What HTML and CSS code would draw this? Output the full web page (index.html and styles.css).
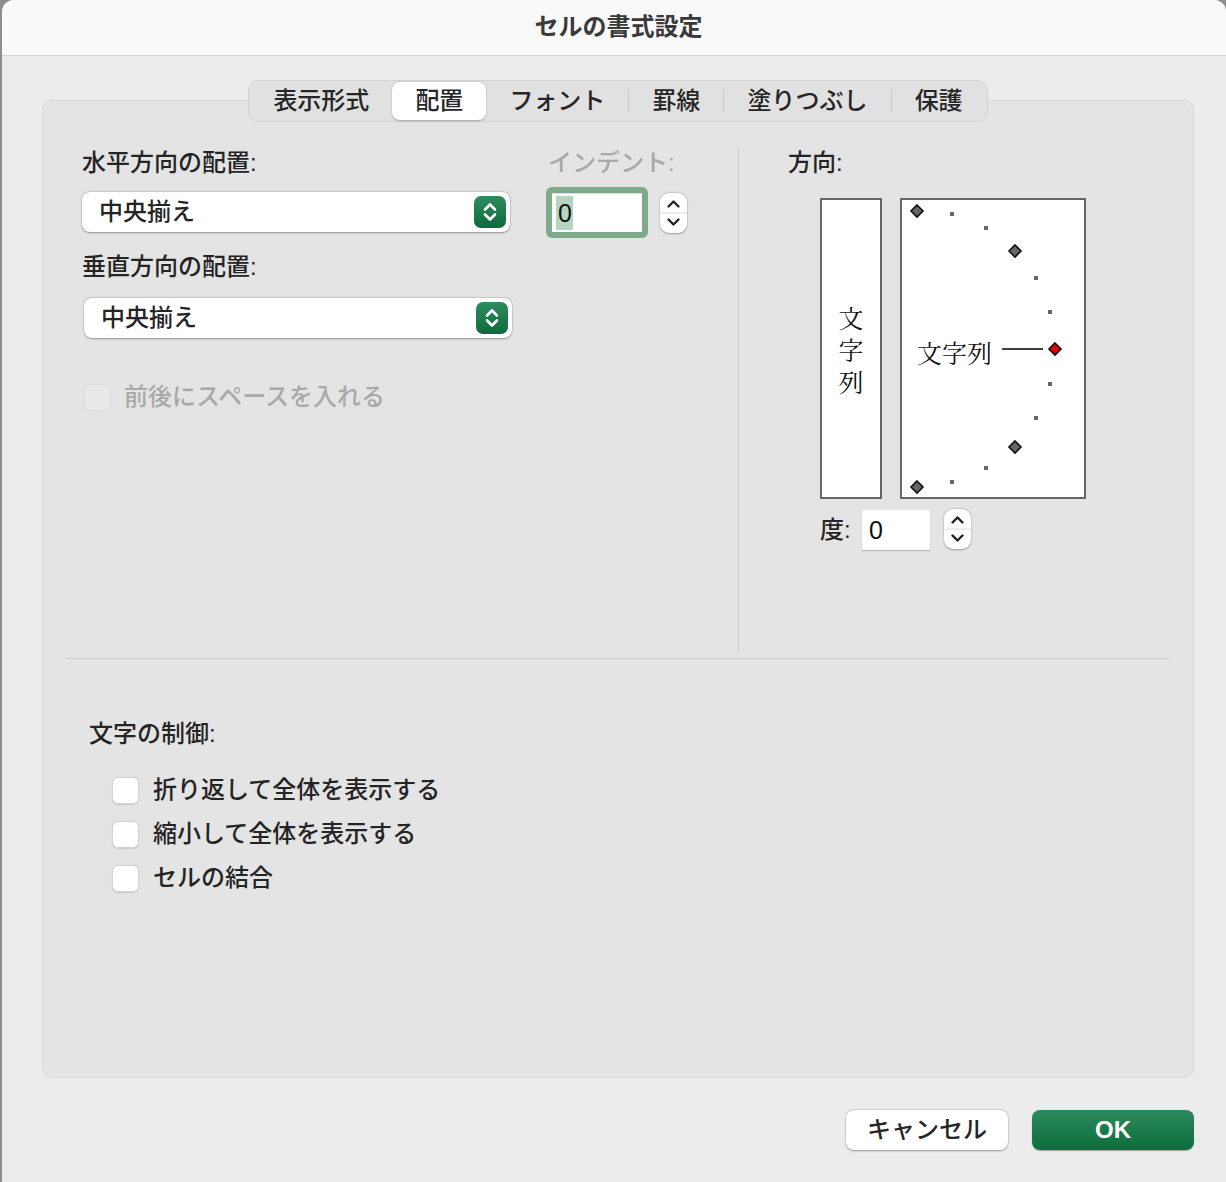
FILE: index.html
```html
<!DOCTYPE html>
<html lang="ja">
<head>
<meta charset="utf-8">
<title>セルの書式設定</title>
<link rel="stylesheet" href="styles.css">
</head>
<body>
<div class="window">
  <header class="titlebar"><h1 class="title">セルの書式設定</h1></header>
  <main class="content">
    <nav class="tabs">
      <span class="tab">表示形式</span>
      <span class="tab active">配置</span>
      <span class="tab">フォント</span><span class="sep"></span>
      <span class="tab">罫線</span><span class="sep"></span>
      <span class="tab">塗りつぶし</span><span class="sep"></span>
      <span class="tab">保護</span>
    </nav>
    <section class="panel">
      <div class="upper">
        <div class="left-col">
          <div class="align-col">
            <div class="label">水平方向の配置:</div>
            <div class="popup">
              <span class="popup-text">中央揃え</span>
              <span class="popup-btn"><svg viewBox="0 0 32 32" width="32" height="32"><path d="M11 13.5 L16 8.5 L21 13.5 M11 18.5 L16 23.5 L21 18.5" stroke="#fff" stroke-width="2.6" fill="none" stroke-linecap="round" stroke-linejoin="round"/></svg></span>
            </div>
            <div class="label label-gap">垂直方向の配置:</div>
            <div class="popup popup-second">
              <span class="popup-text">中央揃え</span>
              <span class="popup-btn"><svg viewBox="0 0 32 32" width="32" height="32"><path d="M11 13.5 L16 8.5 L21 13.5 M11 18.5 L16 23.5 L21 18.5" stroke="#fff" stroke-width="2.6" fill="none" stroke-linecap="round" stroke-linejoin="round"/></svg></span>
            </div>
            <div class="check check-disabled">
              <span class="box"></span>
              <span class="check-label">前後にスペースを入れる</span>
            </div>
          </div>
          <div class="indent-col">
            <div class="label disabled indent-label">インデント:</div>
            <div class="indent-row">
              <div class="focus-ring">
                <div class="field"><span class="sel">0</span></div>
              </div>
              <div class="stepper">
                <svg viewBox="0 0 27 40" width="27" height="40"><line x1="0" y1="20" x2="27" y2="20" stroke="#dcdcdc" stroke-width="1"/><path d="M8.5 13.5 L13.5 8.5 L18.5 13.5 M8.5 26.5 L13.5 31.5 L18.5 26.5" stroke="#222" stroke-width="2.4" fill="none" stroke-linecap="round" stroke-linejoin="round"/></svg>
              </div>
            </div>
          </div>
        </div>
        <div class="right-col">
          <div class="label">方向:</div>
          <div class="orient-row">
            <div class="vbox"><span class="vtext">文字列</span></div>
            <div class="obox">
              <svg viewBox="0 0 182 297" width="182" height="297">
                <g fill="#666">
                  <rect x="48" y="12" width="4" height="4"/>
                  <rect x="82" y="26" width="4" height="4"/>
                  <rect x="132" y="76" width="4" height="4"/>
                  <rect x="146" y="110" width="4" height="4"/>
                  <rect x="146" y="182" width="4" height="4"/>
                  <rect x="132" y="216" width="4" height="4"/>
                  <rect x="82" y="266" width="4" height="4"/>
                  <rect x="48" y="280" width="4" height="4"/>
                </g>
                <g fill="#666" stroke="#111" stroke-width="1.6">
                  <path d="M15 5 L21 11 L15 17 L9 11 Z"/>
                  <path d="M113 45 L119 51 L113 57 L107 51 Z"/>
                  <path d="M113 241 L119 247 L113 253 L107 247 Z"/>
                  <path d="M15 281 L21 287 L15 293 L9 287 Z"/>
                </g>
                <line x1="100" y1="149" x2="141" y2="149" stroke="#000" stroke-width="1.6"/>
                <path d="M153 143 L159 149 L153 155 L147 149 Z" fill="#e60000" stroke="#111" stroke-width="1.6"/>
                <text x="15" y="163" class="otext">文字列</text>
              </svg>
            </div>
          </div>
          <div class="degree-row">
            <span class="degree-label">度:</span>
            <div class="deg-field">0</div>
            <div class="stepper deg-stepper">
              <svg viewBox="0 0 27 40" width="27" height="40"><line x1="0" y1="20" x2="27" y2="20" stroke="#dcdcdc" stroke-width="1"/><path d="M8.5 13.5 L13.5 8.5 L18.5 13.5 M8.5 26.5 L13.5 31.5 L18.5 26.5" stroke="#222" stroke-width="2.4" fill="none" stroke-linecap="round" stroke-linejoin="round"/></svg>
            </div>
          </div>
        </div>
      </div>
      <div class="hsep"></div>
      <div class="lower">
        <div class="label">文字の制御:</div>
        <div class="check-list">
          <div class="check"><span class="box"></span><span class="check-label">折り返して全体を表示する</span></div>
          <div class="check"><span class="box"></span><span class="check-label">縮小して全体を表示する</span></div>
          <div class="check"><span class="box"></span><span class="check-label">セルの結合</span></div>
        </div>
      </div>
    </section>
    <div class="buttons">
      <button class="btn btn-cancel">キャンセル</button>
      <button class="btn btn-ok">OK</button>
    </div>
  </main>
</div>
</body>
</html>
```

FILE: styles.css
```css
* { box-sizing: border-box; }

html, body {
  margin: 0;
  padding: 0;
}

body {
  background: #8e8e8e;
  width: 1226px;
  height: 1182px;
  overflow: hidden;
  font-family: "Liberation Sans", "Noto Sans CJK JP", sans-serif;
  font-size: 24px;
  font-weight: 500;
  color: #242424;
}

.window {
  margin-left: 2px;
  width: 1224px;
  height: 1182px;
  background: #ececec;
  border-radius: 12px 12px 0 0;
  overflow: hidden;
}

.titlebar {
  height: 56px;
  background: #f9f9f9;
  border-bottom: 1px solid #d2d2d2;
  display: flex;
  align-items: center;
  justify-content: center;
  padding-left: 9px;
}

.title {
  margin: 0 0 2px 0;
  font-size: 24px;
  font-weight: 700;
  color: #3a3a3a;
  line-height: 30px;
}

.content {
  padding: 24px 32px 0 40px;
}

/* tabs */
.tabs {
  position: relative;
  z-index: 1;
  width: max-content;
  margin: 0 auto;
  height: 42px;
  padding: 1px;
  display: flex;
  align-items: stretch;
  background: #e1e1e1;
  border: 1px solid #d3d3d3;
  border-radius: 10px;
}

.tab {
  padding: 0 23px;
  display: flex;
  align-items: center;
  line-height: 30px;
  color: #262626;
  border-radius: 8px;
}

.tab.active {
  background: #fff;
  box-shadow: 0 0.5px 2px rgba(0,0,0,0.25);
}

.sep {
  width: 1px;
  height: 22px;
  align-self: center;
  background: #c6c6c6;
}

/* panel */
.panel {
  margin-top: -22px;
  height: 978px;
  background: #e4e4e4;
  border: 1px solid #d9d9d9;
  border-radius: 10px;
}

.label {
  line-height: 30px;
  height: 30px;
  white-space: nowrap;
}

.disabled { color: #a9a9a9; }

.upper {
  display: flex;
  margin-left: 39px;
  padding-top: 47px;
}

.left-col {
  width: 657px;
  height: 504px;
  border-right: 1px solid #cbcbcb;
  display: flex;
  align-items: flex-start;
}

.align-col { width: 430px; }

.popup {
  margin-top: 14px;
  width: 428px;
  height: 40px;
  background: #fff;
  border-radius: 8px;
  box-shadow: 0 0.5px 2px rgba(0,0,0,0.35), 0 0 0 0.5px rgba(0,0,0,0.06);
  display: flex;
  align-items: center;
  justify-content: space-between;
  padding: 0 4px 0 17px;
}

.popup-second {
  margin-top: 16px;
  margin-left: 2px;
}

.label-gap { margin-top: 20px; }

.popup-text { line-height: 30px; }

.popup-btn {
  width: 32px;
  height: 32px;
  border-radius: 7px;
  background: linear-gradient(#2f8c5f, #0c6b3b);
  display: flex;
}

.check {
  display: flex;
  align-items: center;
  height: 44px;
}

.check-disabled {
  margin-top: 37px;
  margin-left: 2px;
}

.box {
  width: 27px;
  height: 27px;
  border-radius: 6px;
  background: #fff;
  border: 1px solid #d3d3d3;
  box-shadow: 0 0.5px 1px rgba(0,0,0,0.12);
  flex: none;
}

.check-disabled .box {
  background: #e9e9e9;
  border-color: #dcdcdc;
  box-shadow: none;
}

.check-label {
  margin-left: 14px;
  line-height: 30px;
  white-space: nowrap;
}

.check-disabled .check-label { color: #a9a9a9; margin-left: 13px; }

.indent-col { margin-left: 34px; }

.indent-label { padding-left: 2px; }

.indent-row {
  margin-top: 9px;
  display: flex;
  align-items: flex-start;
}

.focus-ring {
  width: 102px;
  height: 51px;
  padding: 6px;
  border-radius: 6px;
  background: #7ea98b;
}

.field {
  width: 100%;
  height: 100%;
  background: #fff;
  box-shadow: inset 0 1px 1px rgba(0,0,0,0.15);
  padding: 3px 0 0 4px;
}

.sel {
  display: inline-block;
  height: 34px;
  line-height: 34px;
  padding: 0 1px 0 2px;
  background: #b4d6c1;
  color: #111;
  font-size: 25px;
  font-weight: 400;
}

.stepper {
  width: 27px;
  height: 40px;
  margin-left: 12px;
  margin-top: 6px;
  background: #fff;
  border-radius: 9px;
  box-shadow: 0 0.5px 2px rgba(0,0,0,0.3), 0 0 0 0.5px rgba(0,0,0,0.06);
  display: flex;
}

/* right column */
.right-col { padding-left: 49px; }

.orient-row {
  margin-top: 20px;
  margin-left: 32px;
  display: flex;
  gap: 18px;
}

.vbox {
  width: 62px;
  height: 301px;
  background: #fff;
  border: 2px solid #666;
  display: flex;
  align-items: center;
  justify-content: center;
}

.vtext {
  writing-mode: vertical-rl;
  text-orientation: upright;
  font-family: "Noto Serif CJK JP", "Noto Sans CJK JP", serif;
  font-size: 25px;
  font-weight: 400;
  letter-spacing: 7px;
  margin-top: 10px;
  color: #111;
}

.obox {
  width: 186px;
  height: 301px;
  background: #fff;
  border: 2px solid #666;
  display: flex;
}

.otext {
  font-family: "Noto Serif CJK JP", "Noto Sans CJK JP", serif;
  font-size: 25px;
  font-weight: 400;
  fill: #111;
}

.degree-row {
  margin-top: 10px;
  margin-left: 32px;
  display: flex;
  align-items: flex-start;
}

.degree-label {
  line-height: 30px;
  margin-top: 6px;
  width: 42px;
}

.deg-field {
  margin-top: 1px;
  width: 68px;
  height: 40px;
  background: #fff;
  box-shadow: 0 1px 1px rgba(0,0,0,0.2);
  padding-left: 7px;
  line-height: 40px;
  font-size: 25px;
  font-weight: 400;
  color: #111;
}

.deg-stepper {
  margin-left: 14px;
  margin-top: 0;
}

.hsep {
  height: 1px;
  background: #cdcdcd;
  margin: 6px 23px 0 23px;
}

.lower {
  padding-left: 46px;
  padding-top: 60px;
}

.check-list {
  margin-top: 19px;
  padding-left: 23px;
}

/* buttons */
.buttons {
  margin-top: 32px;
  display: flex;
  justify-content: flex-end;
  gap: 24px;
}

.btn {
  width: 162px;
  height: 40px;
  border-radius: 8px;
  border: none;
  font-family: "Liberation Sans", "Noto Sans CJK JP", sans-serif;
  font-size: 24px;
  font-weight: 500;
  padding: 0;
  line-height: 30px;
}

.btn-cancel {
  background: #fff;
  color: #262626;
  box-shadow: 0 0.5px 2px rgba(0,0,0,0.35), 0 0 0 0.5px rgba(0,0,0,0.06);
}

.btn-ok {
  background: linear-gradient(#2d8a5d, #0c6d3c);
  color: #fff;
  font-weight: 700;
  box-shadow: 0 0.5px 1px rgba(0,0,0,0.3);
}
```
